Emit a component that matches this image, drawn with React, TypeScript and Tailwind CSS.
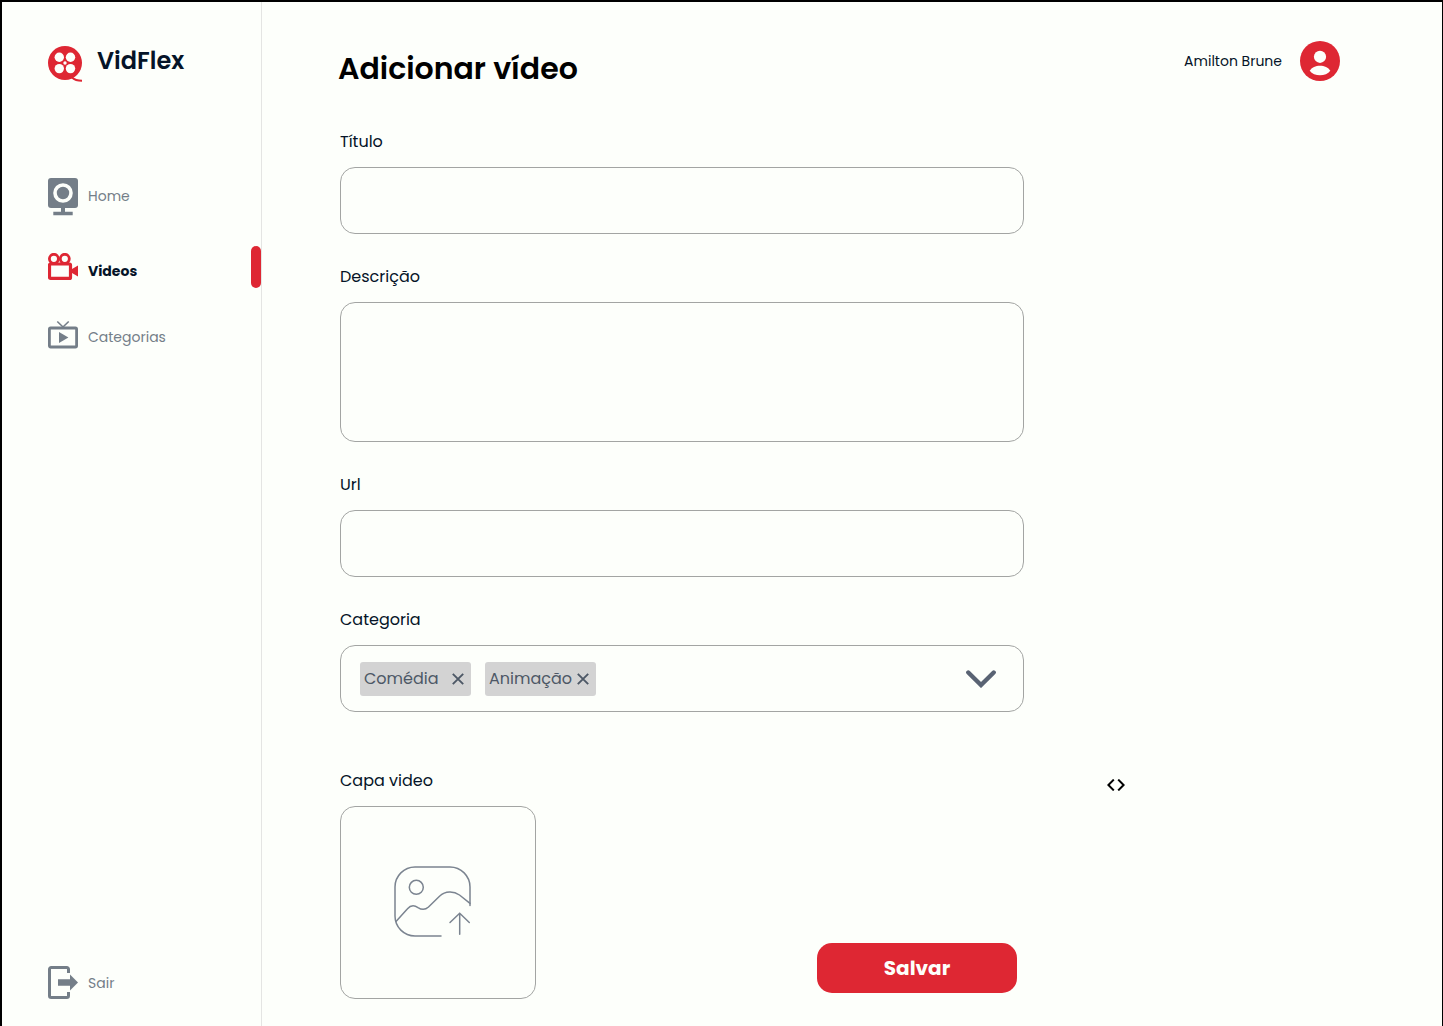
import { useState } from "react";
import type { ReactNode } from "react";

function LogoIcon() {
  return (
    <svg className="h-9 w-[34px] shrink-0" viewBox="0 0 34 36" fill="none" aria-hidden="true">
      <circle cx="17" cy="17" r="17" fill="#de2733" />
      <g fill="#fdfffb">
        <circle cx="11.3" cy="11.3" r="4.7" />
        <circle cx="22.5" cy="11.3" r="4.7" />
        <circle cx="11.3" cy="22.6" r="4.7" />
        <circle cx="22.5" cy="22.6" r="4.7" />
        <circle cx="17" cy="17" r="1.7" />
      </g>
      <path d="M24 31.5C26.5 34 30 34.8 34 34.8" stroke="#de2733" strokeWidth="1.9" />
    </svg>
  );
}

function HomeIcon() {
  return (
    <svg className="h-11 w-[30px] shrink-0" viewBox="0 -2 30 44" fill="#747e88" aria-hidden="true">
      <rect y="2" width="30" height="30" rx="3" />
      <circle cx="15" cy="17" r="8" stroke="#fdfffb" strokeWidth="3.6" />
      <path d="M13 32h4v3.7h7.7v3.6H5.3v-3.6H13z" />
    </svg>
  );
}

function CameraIcon() {
  return (
    <svg className="h-7 w-[30px] shrink-0" viewBox="0 7 30 28" fill="none" stroke="#de2733" aria-hidden="true">
      <circle cx="5.9" cy="12.8" r="4.5" strokeWidth="2.8" />
      <circle cx="16.8" cy="12.8" r="4.5" strokeWidth="2.8" />
      <rect x="1.5" y="18" width="21" height="14.4" rx="1" strokeWidth="3.2" />
      <path d="M24 23l6-3.5v11L24 27z" fill="#de2733" stroke="none" />
    </svg>
  );
}

function TvIcon() {
  return (
    <svg className="h-[42px] w-[30px] shrink-0" viewBox="0 0 30 42" fill="none" stroke="#747e88" aria-hidden="true">
      <rect x="1.4" y="12" width="27.2" height="19" rx="1.2" strokeWidth="2.8" />
      <path d="M9.3 5.5L15 11l5.7-5.5" strokeWidth="1.6" />
      <path d="M11 16l9.4 5.4L11 27z" fill="#747e88" stroke="none" />
    </svg>
  );
}

function ExitIcon() {
  return (
    <svg className="h-[33px] w-[30px] shrink-0" viewBox="0 0 30 33" fill="none" aria-hidden="true">
      <path d="M20.5 7V3.2a1.7 1.7 0 0 0-1.7-1.7H3.2a1.7 1.7 0 0 0-1.7 1.7v26.6a1.7 1.7 0 0 0 1.7 1.7h15.6a1.7 1.7 0 0 0 1.7-1.7V26" stroke="#747e88" strokeWidth="3" />
      <path d="M10 13.3h12V8.6l8 7.9-8 7.9v-4.7H10z" fill="#747e88" />
    </svg>
  );
}

function AvatarIcon() {
  return (
    <svg className="size-10 shrink-0" viewBox="0 0 40 40" aria-hidden="true">
      <circle cx="20" cy="20" r="20" fill="#de2733" />
      <circle cx="20" cy="15.8" r="6.1" fill="#fdfffb" />
      <path d="M9.7 29.8C13.5 23 26.5 23 30.3 29.8C26 35.8 14 35.8 9.7 29.8z" fill="#fdfffb" />
    </svg>
  );
}

function CloseIcon() {
  return (
    <svg className="size-3" viewBox="0 0 12 12" fill="none" stroke="#4d5866" strokeWidth="1.9" aria-hidden="true">
      <path d="M.8.8l10.4 10.4M11.2.8L.8 11.2" />
    </svg>
  );
}

function ImageUploadIcon() {
  return (
    <svg className="h-[72px] w-[78px]" viewBox="0 0 78 72" fill="none" stroke="#7b8490" strokeWidth="1.5" strokeLinecap="round" aria-hidden="true">
      <path d="M76 39.5V21A20 20 0 0 0 56 1H21A20 20 0 0 0 1 21V50A20 20 0 0 0 21 70H47" />
      <circle cx="22.3" cy="21.3" r="7" />
      <path d="M2 55.5L13.5 42.8C16.5 39.3 20.5 39.2 24 41.6C28 44.2 31.5 43.8 34.5 41L45.5 30.2C51.5 24.8 59.5 24.8 65.5 29L76 37.3" />
      <path d="M65.7 47.3V68.3M56 56.5L65.7 47.3L75.3 56.5" />
    </svg>
  );
}

function NavItem({ icon, label }: { icon: ReactNode; label: string }) {
  return (
    <a href="#" className="flex items-center gap-2.5 text-sm leading-5 text-[#747e88]">
      {icon}
      {label}
    </a>
  );
}

function ActiveNavItem({ icon, label }: { icon: ReactNode; label: string }) {
  return (
    <a href="#" aria-current="page" className="relative flex h-[42px] items-end gap-2.5 pb-[7px] text-sm leading-5 font-bold">
      {icon}
      {label}
      <span className="absolute inset-y-0 right-0 w-2.5 rounded-full bg-[#de2733]" />
    </a>
  );
}

function Field({ id, label, children }: { id: string; label: string; children: ReactNode }) {
  return (
    <div className="flex flex-col gap-3">
      <label htmlFor={id} className="text-base leading-[26px]">
        {label}
      </label>
      {children}
    </div>
  );
}

export default function App() {
  const [tags, setTags] = useState(["Comédia", "Animação"]);

  return (
    <div className="flex min-h-screen border-t-2 border-r border-l-2 border-black bg-[#fdfffb] font-[Poppins,Inter,sans-serif] text-[#051428]">
      <aside className="flex w-[260px] shrink-0 flex-col border-r border-[#e4e5e3] pt-11 pb-[27px] pl-[46px]">
        <div className="flex items-start gap-[15px]">
          <LogoIcon />
          <span className="text-2xl leading-[30px] font-semibold">VidFlex</span>
        </div>
        <nav className="mt-[92px] flex flex-col gap-7">
          <NavItem icon={<HomeIcon />} label="Home" />
          <ActiveNavItem icon={<CameraIcon />} label="Videos" />
          <NavItem icon={<TvIcon />} label="Categorias" />
        </nav>
        <a href="#" className="mt-auto flex items-center gap-2.5 text-sm text-[#747e88]">
          <ExitIcon />
          Sair
        </a>
      </aside>

      <main className="min-w-0 flex-1 pt-[39px] pr-[102px] pb-[27px] pl-[76px]">
        <header className="flex items-start justify-between">
          <h1 className="pt-2 text-[30px] leading-10 font-semibold text-black">Adicionar vídeo</h1>
          <div className="flex items-center gap-[18px] text-sm leading-[22px]">
            <span>Amilton Brune</span>
            <AvatarIcon />
          </div>
        </header>

        <form className="mt-[38px] pl-0.5" onSubmit={(e) => e.preventDefault()}>
          <div className="flex max-w-[684px] flex-col gap-[30px] pt-0.5">
            <Field id="titulo" label="Título">
              <input id="titulo" type="text" className="h-[67px] w-full rounded-[15px] border border-[#a3a5a3] px-5" />
            </Field>
            <Field id="descricao" label="Descrição">
              <textarea id="descricao" className="block h-[140px] w-full resize-none rounded-[15px] border border-[#a3a5a3] px-5 py-4" />
            </Field>
            <Field id="url" label="Url">
              <input id="url" type="url" className="h-[67px] w-full rounded-[15px] border border-[#a3a5a3] px-5" />
            </Field>
            <Field id="categoria" label="Categoria">
              <div className="relative flex h-[67px] items-center gap-3.5 rounded-[15px] border border-[#a3a5a3] pl-[19px]">
                {tags.map((tag) => (
                  <span key={tag} className="flex h-[34px] w-[111px] items-center justify-between rounded-[3px] bg-[#d3d3d3] pr-[7px] pl-1 text-base text-[#4d5866]">
                    {tag}
                    <button type="button" aria-label={`Remover ${tag}`} onClick={() => setTags(tags.filter((t) => t !== tag))}>
                      <CloseIcon />
                    </button>
                  </span>
                ))}
                <select id="categoria" className="h-full min-w-0 flex-1 appearance-none rounded-[15px]">
                  <option value="" />
                </select>
                <svg className="pointer-events-none absolute right-[27px] h-[18px] w-[30px]" viewBox="0 0 30 18" fill="none" stroke="#596373" strokeWidth="4.4" strokeLinecap="round" aria-hidden="true">
                  <path d="M2.3 2.5L15 15L27.7 2.5" />
                </svg>
              </div>
            </Field>
          </div>

          <div className="mt-14 flex items-start gap-[83px]">
            <div className="flex w-full max-w-[684px] items-end justify-between pr-[7px]">
              <Field id="capa" label="Capa video">
                <label htmlFor="capa" className="relative flex h-[193px] w-[196px] cursor-pointer items-center justify-center rounded-[15px] border border-[#a3a5a3] pr-2.5 pb-0.5 focus-within:border-[#de2733]">
                  <input id="capa" type="file" accept="image/*" className="sr-only" />
                  <ImageUploadIcon />
                </label>
              </Field>
              <button type="submit" className="mb-1.5 h-[50px] w-[200px] rounded-[15px] bg-[#de2733] text-xl font-bold text-[#fdfffb]">
                Salvar
              </button>
            </div>
            <svg className="mt-[11px] h-3 w-[18px] shrink-0" viewBox="0 0 18 12" fill="none" stroke="#000" strokeWidth="2" aria-hidden="true">
              <path d="M6.8.6L1.4 6l5.4 5.4M11.2.6L16.6 6l-5.4 5.4" />
            </svg>
          </div>
        </form>
      </main>
    </div>
  );
}
